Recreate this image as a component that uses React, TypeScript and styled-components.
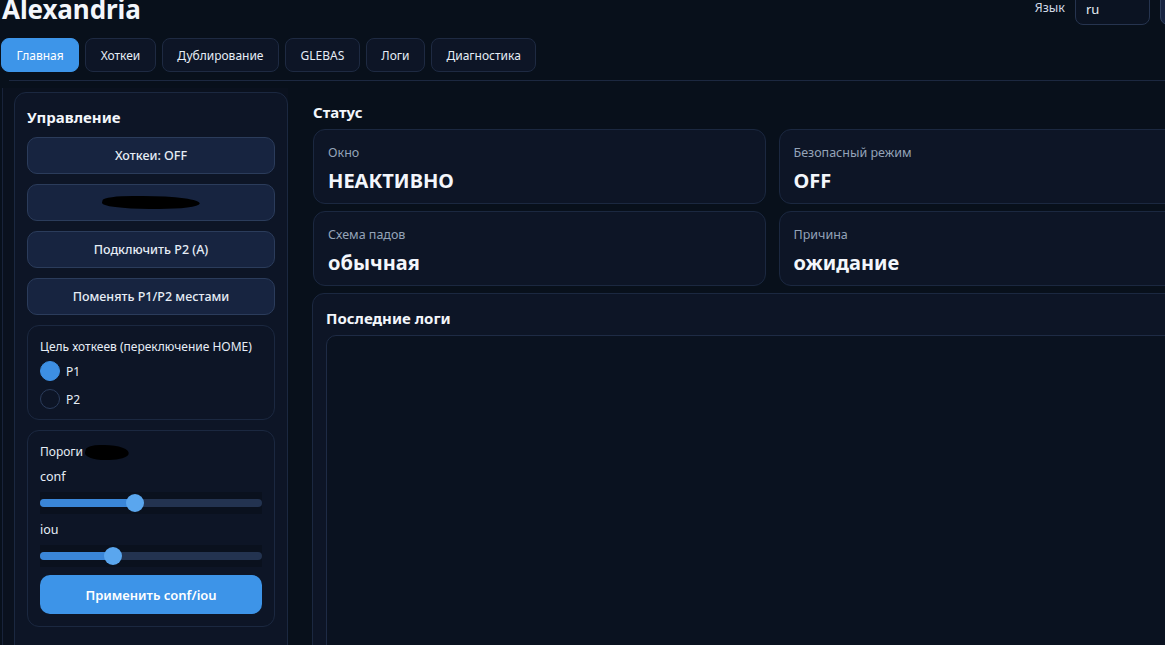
import React, { useState } from "react";
import styled, { createGlobalStyle } from "styled-components";

const GlobalStyle = createGlobalStyle`
  html, body {
    margin: 0;
    padding: 0;
    background: #08101b;
    overflow: hidden;
  }
  body {
    font-family: "Noto Sans", "Open Sans", "Liberation Sans", sans-serif;
    color: #e6edf6;
  }
  * { box-sizing: border-box; }
`;

const tabs = ["Главная", "Хоткеи", "Дублирование", "GLEBAS", "Логи", "Диагностика"];

const statusItems = [
  { label: "Окно", value: "НЕАКТИВНО" },
  { label: "Безопасный режим", value: "OFF" },
  { label: "Схема падов", value: "обычная" },
  { label: "Причина", value: "ожидание" },
];

const App: React.FC = () => {
  const [activeTab, setActiveTab] = useState(0);
  const [target, setTarget] = useState<"P1" | "P2">("P1");
  const conf = 42.6;
  const iou = 32.8;

  return (
    <Page>
      <GlobalStyle />
      <Header>
        <Title>Alexandria</Title>
        <HeaderRight>
          <LangLabel>Язык</LangLabel>
          <LangSelect>ru</LangSelect>
          <GhostBox />
        </HeaderRight>
      </Header>

      <Tabs>
        {tabs.map((t, i) => (
          <Tab key={t} $active={i === activeTab} onClick={() => setActiveTab(i)}>
            {t}
          </Tab>
        ))}
      </Tabs>
      <Divider />

      <Main>
        <Sidebar>
          <Card>
            <CardTitle>Управление</CardTitle>
            <ButtonStack>
              <ActionButton>Хоткеи: OFF</ActionButton>
              <ActionButton>
                <Redacted $w={98} $h={13} />
              </ActionButton>
              <ActionButton>Подключить P2 (A)</ActionButton>
              <ActionButton>Поменять P1/P2 местами</ActionButton>
            </ButtonStack>

            <Group $bottom={10}>
              <GroupLabel>Цель хоткеев (переключение HOME)</GroupLabel>
              <RadioList>
                {(["P1", "P2"] as const).map((p) => (
                  <RadioRow key={p} onClick={() => setTarget(p)}>
                    <RadioDot $checked={target === p} />
                    <span>{p}</span>
                  </RadioRow>
                ))}
              </RadioList>
            </Group>

            <Group $bottom={12}>
              <GroupLabel>
                Пороги <Redacted $w={44} $h={15} />
              </GroupLabel>
              <SliderLabel>conf</SliderLabel>
              <Slider>
                <Track>
                  <Fill style={{ width: `${conf}%` }} />
                  <Thumb style={{ left: `${conf}%` }} />
                </Track>
              </Slider>
              <SliderLabel>iou</SliderLabel>
              <Slider>
                <Track>
                  <Fill style={{ width: `${iou}%` }} />
                  <Thumb style={{ left: `${iou}%` }} />
                </Track>
              </Slider>
              <PrimaryButton>Применить conf/iou</PrimaryButton>
            </Group>
          </Card>
        </Sidebar>

        <Content>
          <SectionTitle>Статус</SectionTitle>
          <StatusGrid>
            {statusItems.map((s) => (
              <StatusCard key={s.label}>
                <StatusLabel>{s.label}</StatusLabel>
                <StatusValue>{s.value}</StatusValue>
              </StatusCard>
            ))}
          </StatusGrid>
          <LogsCard>
            <LogsTitle>Последние логи</LogsTitle>
            <LogsBox />
          </LogsCard>
        </Content>
      </Main>
    </Page>
  );
};

export default App;

const Page = styled.div`
  width: 1231px;
  padding-left: 1px;
`;

const Header = styled.div`
  display: flex;
  justify-content: space-between;
  align-items: flex-start;
  height: 30px;
`;

const Title = styled.h1`
  margin: -9px 0 0 1px;
  font-size: 26px;
  font-weight: 700;
  color: #f3f6fb;
  letter-spacing: -0.1px;
`;

const HeaderRight = styled.div`
  display: flex;
  align-items: flex-start;
  gap: 10px;
`;

const LangLabel = styled.span`
  font-size: 12.5px;
  color: #cfd8e6;
  line-height: 16px;
`;

const LangSelect = styled.div`
  width: 75px;
  height: 35px;
  margin-top: -10px;
  padding: 10px 10px 0;
  border: 1px solid #26344f;
  border-radius: 8px;
  background: #0b1322;
  font-size: 13px;
  line-height: 16px;
  color: #e6edf6;
`;

const GhostBox = styled.div`
  width: 71px;
  height: 35px;
  margin-top: -10px;
  border: 1px solid #2d3d5a;
  border-radius: 8px;
  background: #172441;
`;

const Tabs = styled.div`
  display: flex;
  gap: 6px;
  margin-top: 8px;
`;

const Tab = styled.button<{ $active?: boolean }>`
  height: 34px;
  padding: 0 14.5px;
  border-radius: 8px;
  border: 1px solid ${(p) => (p.$active ? "#3d95e9" : "#1e2a42")};
  background: ${(p) => (p.$active ? "#3d95e9" : "#0d1526")};
  color: ${(p) => (p.$active ? "#ffffff" : "#e6edf6")};
  font-family: inherit;
  font-size: 12px;
  cursor: pointer;
`;

const Divider = styled.div`
  margin: 8px 0 0 8px;
  border-top: 1px solid #1c2840;
`;

const Main = styled.div`
  display: flex;
  margin-top: 7px;
`;

const Sidebar = styled.div`
  margin-left: 1px;
  border-left: 1px solid #18233a;
  background: #0a111e;
  padding: 4px 0 0 11px;
  height: 600px;
`;

const Card = styled.div`
  width: 274px;
  padding: 14px 12px 40px;
  background: #0d1526;
  border: 1px solid #1b2840;
  border-radius: 12px;
  display: flex;
  flex-direction: column;
`;

const CardTitle = styled.div`
  font-size: 15px;
  font-weight: 700;
  line-height: 20px;
  color: #f3f6fb;
  margin-bottom: 10px;
`;

const ButtonStack = styled.div`
  display: flex;
  flex-direction: column;
  gap: 10px;
`;

const ActionButton = styled.button`
  height: 37px;
  border-radius: 10px;
  border: 1px solid #2b3c5b;
  background: #172440;
  color: #e6edf6;
  font-family: inherit;
  font-size: 12.5px;
  font-weight: 500;
  display: flex;
  align-items: center;
  justify-content: center;
  cursor: pointer;
`;

const Redacted = styled.span<{ $w: number; $h: number }>`
  display: inline-block;
  width: ${(p) => p.$w}px;
  height: ${(p) => p.$h}px;
  background: #000;
  border-radius: 30% 60% 40% 50%;
  vertical-align: middle;
  transform: skewX(-14deg);
`;

const Group = styled.div<{ $bottom: number }>`
  margin-top: 10px;
  padding: 12px 12px ${(p) => p.$bottom}px;
  border: 1px solid #1b2840;
  border-radius: 12px;
  display: flex;
  flex-direction: column;
`;

const GroupLabel = styled.div`
  font-size: 12px;
  line-height: 18px;
  white-space: nowrap;
  color: #e6edf6;
  display: flex;
  align-items: center;
  gap: 2px;
`;

const RadioList = styled.div`
  display: flex;
  flex-direction: column;
  gap: 8px;
  margin-top: 5px;
`;

const RadioRow = styled.label`
  display: flex;
  align-items: center;
  gap: 6px;
  font-size: 12px;
  color: #e6edf6;
  cursor: pointer;
`;

const RadioDot = styled.span<{ $checked?: boolean }>`
  width: 20px;
  height: 20px;
  border-radius: 50%;
  background: ${(p) => (p.$checked ? "#3d8fe3" : "transparent")};
  border: 1px solid ${(p) => (p.$checked ? "#3d8fe3" : "#2b3c5b")};
`;

const SliderLabel = styled.div`
  font-size: 12.5px;
  line-height: 18px;
  color: #e6edf6;
  margin-top: 7px;
`;

const Slider = styled.div`
  height: 22px;
  margin-top: 6px;
  background: #0a111e;
  display: flex;
  align-items: center;
`;

const Track = styled.div`
  position: relative;
  flex: 1;
  height: 8px;
  border-radius: 4px;
  background: #233350;
`;

const Fill = styled.div`
  height: 100%;
  border-radius: 4px;
  background: #3a86d8;
`;

const Thumb = styled.div`
  position: absolute;
  top: 50%;
  width: 18px;
  height: 18px;
  margin: -9px 0 0 -9px;
  border-radius: 50%;
  background: #5aa6ee;
`;

const PrimaryButton = styled.button`
  margin-top: 8px;
  height: 39px;
  border-radius: 10px;
  border: none;
  background: #3d94e8;
  color: #ffffff;
  font-family: inherit;
  font-size: 13px;
  font-weight: 600;
  cursor: pointer;
`;

const Content = styled.div`
  flex: 1;
  margin-left: 24px;
  padding-top: 14px;
`;

const SectionTitle = styled.div`
  font-size: 15px;
  font-weight: 700;
  line-height: 20px;
  color: #f3f6fb;
  margin: 0 0 7px 1px;
`;

const StatusGrid = styled.div`
  display: grid;
  grid-template-columns: 1fr 1fr;
  column-gap: 13px;
  row-gap: 7px;
  padding-left: 1px;
`;

const StatusCard = styled.div`
  height: 75px;
  padding: 14px 14px 0;
  background: #0d1526;
  border: 1px solid #1b2840;
  border-radius: 12px;
`;

const StatusLabel = styled.div`
  font-size: 12.5px;
  line-height: 18px;
  color: #94a3b8;
`;

const StatusValue = styled.div`
  margin-top: 7px;
  font-size: 20px;
  font-weight: 700;
  line-height: 24px;
  color: #f3f6fb;
`;

const LogsCard = styled.div`
  margin-top: 7px;
  padding: 14px 13px 0;
  background: #0d1526;
  border: 1px solid #1b2840;
  border-radius: 12px;
  height: 400px;
`;

const LogsTitle = styled.div`
  font-size: 15px;
  font-weight: 700;
  line-height: 20px;
  color: #f3f6fb;
`;

const LogsBox = styled.div`
  margin-top: 7px;
  height: 360px;
  background: #0a1220;
  border: 1px solid #1e2b45;
  border-radius: 10px;
`;
